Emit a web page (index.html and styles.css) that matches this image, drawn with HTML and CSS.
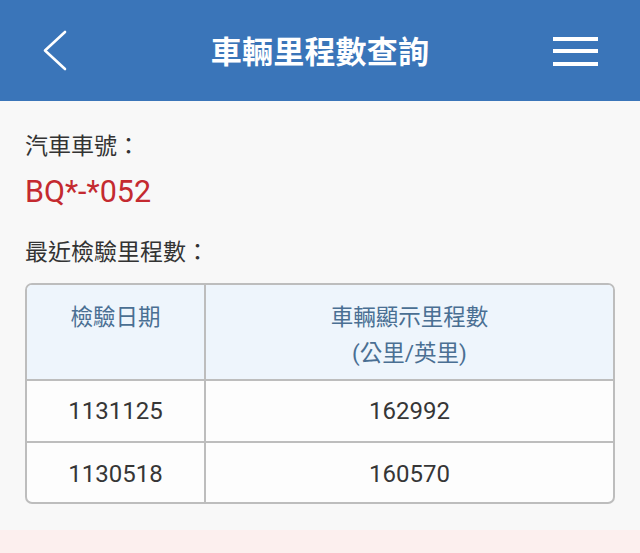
FILE: index.html
```html
<!DOCTYPE html>
<html lang="zh-Hant">
<head>
<meta charset="utf-8">
<title>車輛里程數查詢</title>
<link rel="stylesheet" href="styles.css">
</head>
<body>
<header class="topbar">
  <span class="back" aria-label="返回">
    <svg width="26" height="42" viewBox="0 0 26 42"><polyline points="23,2 3,20.5 23,39" fill="none" stroke="#fff" stroke-width="2.6" stroke-linecap="round" stroke-linejoin="round"/></svg>
  </span>
  <h1 class="title">車輛里程數查詢</h1>
  <span class="menu" aria-label="選單"><i></i><i></i><i></i></span>
</header>
<main class="content">
  <div class="label">汽車車號：</div>
  <div class="plate">BQ*-*052</div>
  <div class="label label-gap">最近檢驗里程數：</div>
  <div class="table-wrap">
    <table class="mileage">
      <thead>
        <tr>
          <th class="col-date">檢驗日期</th>
          <th class="col-km">車輛顯示里程數<br>(公里/英里)</th>
        </tr>
      </thead>
      <tbody>
        <tr class="row1"><td class="col-date">1131125</td><td class="col-km">162992</td></tr>
        <tr class="row2"><td class="col-date">1130518</td><td class="col-km">160570</td></tr>
      </tbody>
    </table>
  </div>
</main>
<div class="footer-band"></div>
</body>
</html>
```
FILE: styles.css
```css
html, body {
  margin: 0;
  padding: 0;
}
body {
  background: #f8f8f8;
  font-family: Roboto, "Noto Sans CJK TC", "Noto Sans", sans-serif;
  color: #333;
  min-height: 553px;
  display: flex;
  flex-direction: column;
}
.topbar {
  height: 101px;
  background: #3a75b9;
  display: grid;
  grid-template-columns: 1fr auto 1fr;
  align-items: center;
  padding: 0 42px;
}
.back {
  justify-self: start;
  display: flex;
  margin-top: 1px;
}
.title {
  margin: 0;
  color: #fff;
  font-size: 31px;
  font-weight: 700;
  line-height: 40px;
  margin-top: 4px;
  letter-spacing: 0.2px;
}
.menu {
  justify-self: end;
  display: flex;
  flex-direction: column;
  gap: 8.5px;
  width: 45px;
  margin-top: 1px;
}
.menu i {
  display: block;
  height: 4px;
  background: #fff;
}
.content {
  padding: 30px 25px 26px;
}
.label {
  font-size: 23px;
  line-height: 32px;
  color: #333;
}
.plate {
  margin-top: 9px;
  font-size: 30.5px;
  line-height: 40px;
  color: #c42a30;
}
.label-gap {
  margin-top: 25px;
}
.table-wrap {
  margin-top: 14px;
  border: 2px solid #bdbdbd;
  border-radius: 7px;
  overflow: hidden;
  background: #fdfdfd;
}
.mileage {
  width: 100%;
  border-collapse: separate;
  border-spacing: 0;
}
.mileage th {
  background: #eef5fc;
  color: #4a6f93;
  font-weight: 400;
  font-size: 22.5px;
  line-height: 36px;
  vertical-align: top;
  padding: 14px 0 8px;
  border-bottom: 2px solid #bdbdbd;
}
.mileage td {
  font-size: 24px;
  color: #363636;
  text-align: center;
  vertical-align: middle;
  padding: 0;
}
.mileage .col-date {
  width: 177px;
  border-right: 2px solid #bdbdbd;
}
.row1 td {
  height: 60px;
  border-bottom: 2px solid #bdbdbd;
}
.row2 td {
  height: 57px;
  padding-top: 2px;
}
.footer-band {
  flex: 1;
  background: #fcefee;
}
```
